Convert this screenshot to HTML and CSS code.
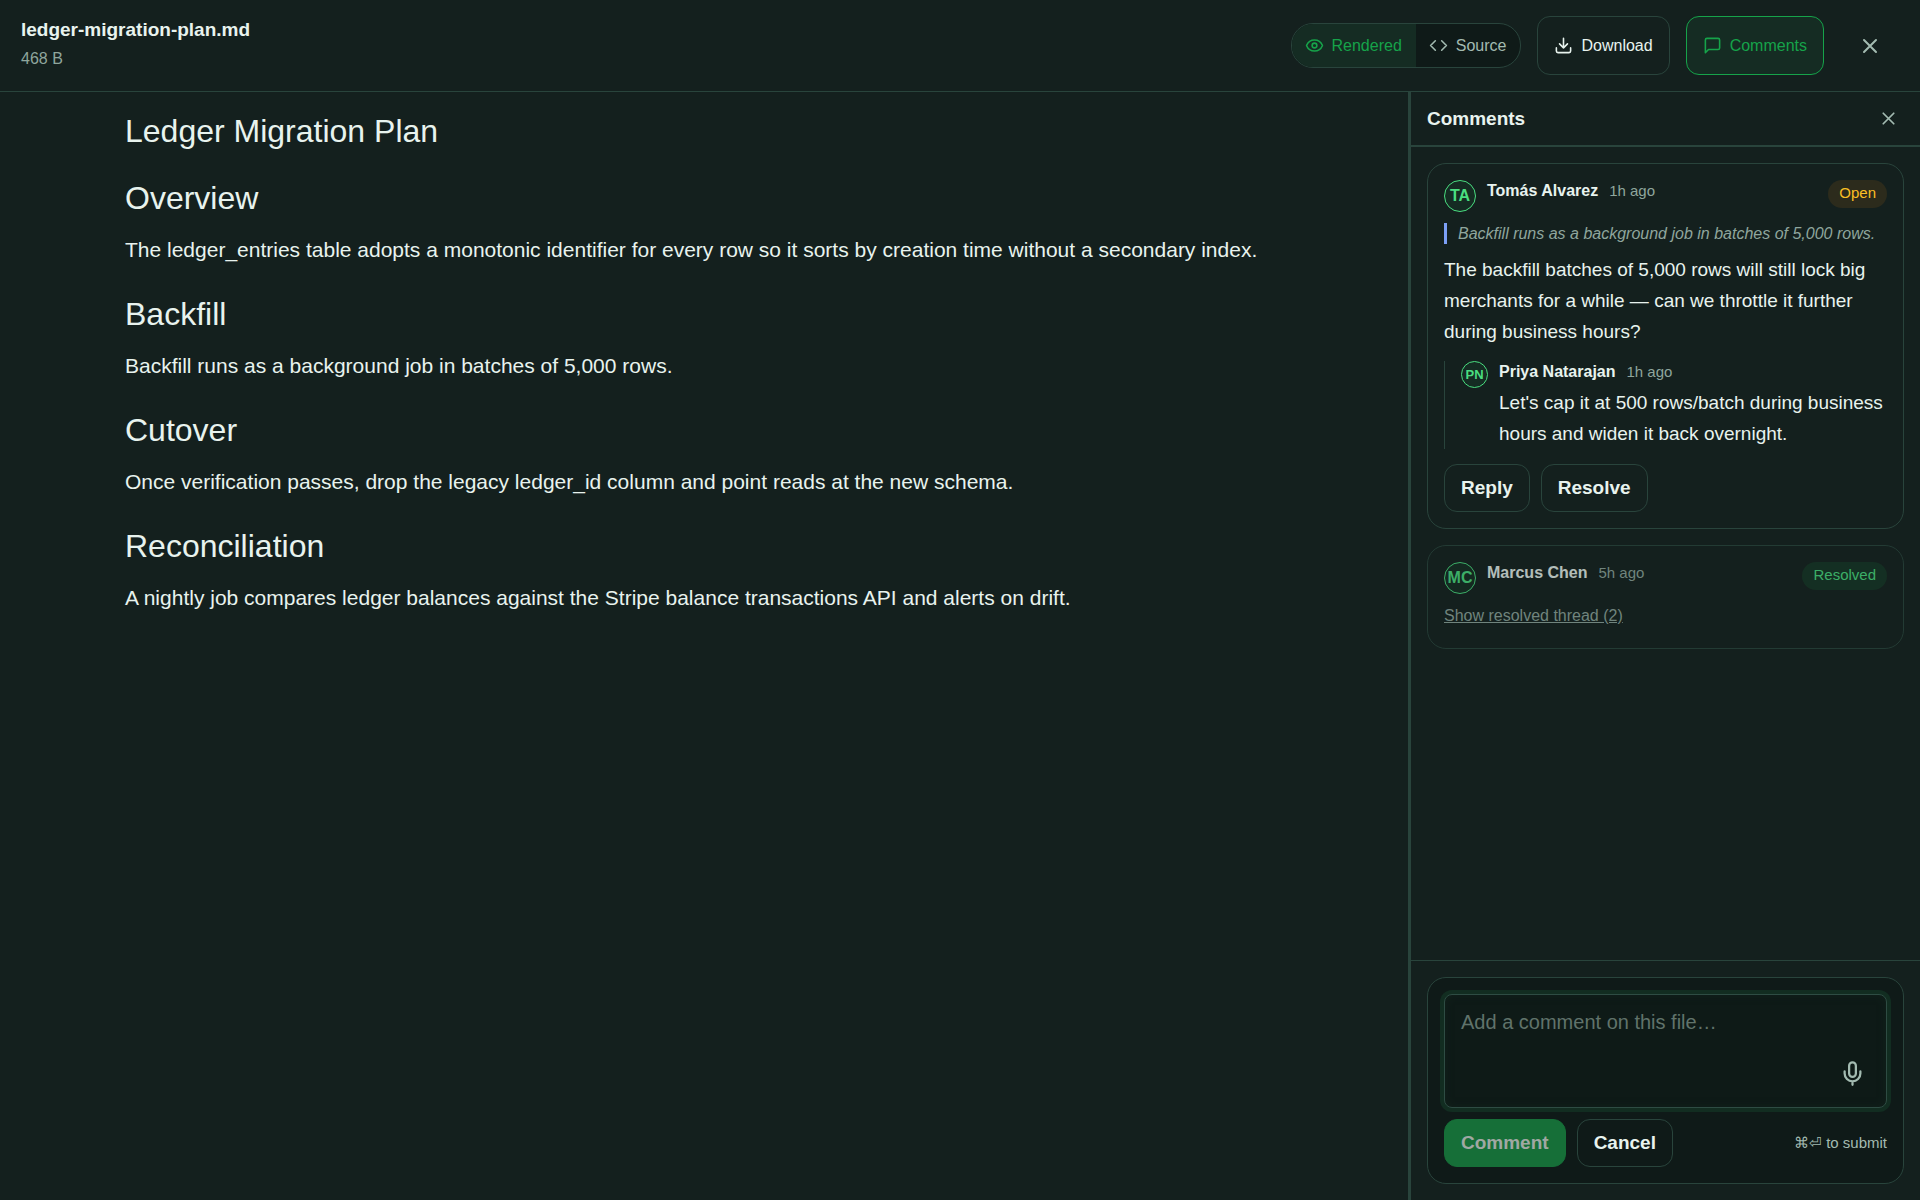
FILE: index.html
```
<!DOCTYPE html>
<html lang="en">

<head>
    <title>ledger-migration-plan.md</title>
    <meta charset="utf-8">
    <meta name="viewport" content="width=device-width, initial-scale=1.0">
    <link rel="stylesheet" href="styles.css">
</head>

<body>
    <header class="topbar">
        <div class="file">
            <div class="file-name">ledger-migration-plan.md</div>
            <div class="file-size">468 B</div>
        </div>
        <div class="actions">
            <div class="toggle" role="group" aria-label="View mode">
                <button type="button" class="toggle-btn active" aria-pressed="true">
                    <svg class="icon" viewBox="0 0 24 24"><path d="M2.06 12.35a1 1 0 0 1 0-.7 10.75 10.75 0 0 1 19.88 0 1 1 0 0 1 0 .7 10.75 10.75 0 0 1-19.88 0"/><circle cx="12" cy="12" r="3"/></svg>
                    Rendered
                </button>
                <button type="button" class="toggle-btn" aria-pressed="false">
                    <svg class="icon" viewBox="0 0 24 24"><path d="m16 18 6-6-6-6M8 6l-6 6 6 6"/></svg>
                    Source
                </button>
            </div>
            <button type="button" class="action-btn">
                <svg class="icon" viewBox="0 0 24 24"><path d="M12 15V3M21 15v4a2 2 0 0 1-2 2H5a2 2 0 0 1-2-2v-4M7 10l5 5 5-5"/></svg>
                Download
            </button>
            <button type="button" class="action-btn active" aria-pressed="true">
                <svg class="icon" viewBox="0 0 24 24"><path d="M21 15a2 2 0 0 1-2 2H7l-4 4V5a2 2 0 0 1 2-2h14a2 2 0 0 1 2 2z"/></svg>
                Comments
            </button>
            <button type="button" class="close-btn" aria-label="Close file">
                <svg class="icon-lg" viewBox="0 0 24 24"><path d="M18 6 6 18M6 6l12 12"/></svg>
            </button>
        </div>
    </header>

    <div class="main">
        <main class="viewer">
            <article class="doc">
                <h1>Ledger Migration Plan</h1>
                <h2>Overview</h2>
                <p>The ledger_entries table adopts a monotonic identifier for every row so it sorts by creation time without a secondary index.</p>
                <h2>Backfill</h2>
                <p>Backfill runs as a background job in batches of 5,000 rows.</p>
                <h2>Cutover</h2>
                <p>Once verification passes, drop the legacy ledger_id column and point reads at the new schema.</p>
                <h2>Reconciliation</h2>
                <p>A nightly job compares ledger balances against the Stripe balance transactions API and alerts on drift.</p>
            </article>
        </main>

        <aside class="sidebar">
            <div class="sidebar-header">
                <h2>Comments</h2>
                <button type="button" class="panel-close" aria-label="Close comments">
                    <svg class="icon-md" viewBox="0 0 24 24"><path d="M18 6 6 18M6 6l12 12"/></svg>
                </button>
            </div>

            <div class="threads">
                <section class="card">
                    <div class="comment-head">
                        <span class="avatar">TA</span>
                        <span class="author">Tomás Alvarez</span>
                        <span class="time">1h ago</span>
                        <span class="badge open">Open</span>
                    </div>
                    <blockquote class="quote">Backfill runs as a background job in batches of 5,000 rows.</blockquote>
                    <p class="comment-text">The backfill batches of 5,000 rows will still lock big merchants for a while — can we throttle it further during business hours?</p>
                    <div class="reply">
                        <span class="avatar small">PN</span>
                        <div class="reply-body">
                            <div class="reply-head">
                                <span class="author">Priya Natarajan</span>
                                <span class="time">1h ago</span>
                            </div>
                            <p class="comment-text">Let's cap it at 500 rows/batch during business hours and widen it back overnight.</p>
                        </div>
                    </div>
                    <div class="card-actions">
                        <button type="button" class="btn">Reply</button>
                        <button type="button" class="btn">Resolve</button>
                    </div>
                </section>

                <section class="card resolved">
                    <div class="comment-head">
                        <span class="avatar">MC</span>
                        <span class="author">Marcus Chen</span>
                        <span class="time">5h ago</span>
                        <span class="badge done">Resolved</span>
                    </div>
                    <button type="button" class="show-thread">Show resolved thread (2)</button>
                </section>
            </div>

            <div class="composer-wrap">
                <form class="composer">
                    <div class="field">
                        <textarea class="input" aria-label="Add a comment" placeholder="Add a comment on this file…"></textarea>
                        <button type="button" class="mic" aria-label="Dictate">
                            <svg class="icon-xl" viewBox="0 0 24 24"><path d="M12 19v3M19 10v2a7 7 0 0 1-14 0v-2"/><rect x="9" y="2" width="6" height="13" rx="3"/></svg>
                        </button>
                    </div>
                    <div class="composer-actions">
                        <button type="submit" class="btn primary" disabled>Comment</button>
                        <button type="button" class="btn">Cancel</button>
                        <span class="hint">⌘⏎ to submit</span>
                    </div>
                </form>
            </div>
        </aside>
    </div>
</body>

</html>
```
FILE: styles.css
```
:root {
    --bg: #14201e;
    --bg-deep: #0f1a18;
    --border: #29443c;
    --text: #e8f3ee;
    --muted: #8fa69d;
    --icon: #a3bbb1;
    --green: #16a34a;
    --green-light: #4ade80;
    --green-bg: #152c23;
}

* {
    box-sizing: border-box;
}

body {
    margin: 0;
    height: 100vh;
    display: flex;
    flex-direction: column;
    overflow: hidden;
    background: var(--bg);
    color: var(--text);
    font-family: "Liberation Sans", Arial, sans-serif;
    font-size: 16px;
}

h1, h2, p, blockquote {
    margin: 0;
}

button {
    font-family: inherit;
    color: inherit;
    background: none;
    border: 0;
    padding: 0;
    cursor: pointer;
}

svg {
    flex: none;
    fill: none;
    stroke: currentColor;
    stroke-width: 2;
    stroke-linecap: round;
    stroke-linejoin: round;
}

.icon { width: 19px; height: 19px; }
.icon-md { width: 21px; height: 21px; }
.icon-lg { width: 24px; height: 24px; }
.icon-xl { width: 27px; height: 27px; }

/* top bar */
.topbar {
    display: flex;
    justify-content: space-between;
    padding: 16px 21px;
    border-bottom: 1px solid var(--border);
}

.file-name {
    font-size: 19px;
    font-weight: bold;
    line-height: 28px;
}

.file-size {
    color: var(--muted);
    line-height: 30px;
}

.actions {
    display: flex;
    align-items: center;
    gap: 16px;
}

.toggle {
    display: flex;
    height: 45px;
    border: 1px solid var(--border);
    border-radius: 22px;
    background: var(--bg-deep);
    overflow: hidden;
}

.toggle-btn {
    display: flex;
    align-items: center;
    gap: 8px;
    padding: 0 14px 0 13px;
    font-size: 16px;
    color: var(--icon);
}

.toggle-btn.active {
    color: var(--green);
    background: var(--green-bg);
}

.action-btn {
    display: flex;
    align-items: center;
    gap: 8px;
    height: 59px;
    padding: 0 16px;
    border: 1px solid var(--border);
    border-radius: 13px;
    font-size: 16px;
}

.action-btn.active {
    color: var(--green);
    border-color: var(--green);
    background: var(--green-bg);
}

.close-btn {
    display: flex;
    align-items: center;
    justify-content: center;
    width: 59px;
    height: 59px;
    color: var(--icon);
}

/* document */
.main {
    flex: 1;
    display: flex;
    min-height: 0;
}

.viewer {
    flex: 1;
    overflow-y: auto;
}

.doc {
    max-width: 1200px;
    margin: 0 auto;
    padding: 19px 21px;
}

.doc h1,
.doc h2 {
    font-size: 32px;
    font-weight: normal;
    line-height: 40px;
    margin-bottom: 27px;
}

.doc h2 {
    margin-bottom: 15px;
}

.doc p {
    font-size: 21px;
    line-height: 34px;
    margin-bottom: 27px;
}

/* comments panel */
.sidebar {
    display: flex;
    flex-direction: column;
    width: 512px;
    border-left: 3px solid var(--border);
}

.sidebar-header {
    display: flex;
    align-items: center;
    justify-content: space-between;
    height: 55px;
    padding: 0 21px 0 16px;
    border-bottom: 2px solid var(--border);
}

.sidebar-header h2 {
    font-size: 19px;
}

.panel-close {
    display: flex;
    color: var(--icon);
}

.threads {
    flex: 1;
    display: flex;
    flex-direction: column;
    gap: 16px;
    padding: 16px;
    overflow-y: auto;
}

.card {
    padding: 16px;
    border: 1px solid var(--border);
    border-radius: 19px;
}

.card.resolved {
    opacity: 0.75;
}

.comment-head {
    display: flex;
    align-items: flex-start;
    gap: 11px;
}

.avatar {
    display: flex;
    flex: none;
    align-items: center;
    justify-content: center;
    width: 32px;
    height: 32px;
    border: 1px solid var(--green-light);
    border-radius: 50%;
    background: var(--green-bg);
    color: var(--green-light);
    font-weight: bold;
}

.avatar.small {
    width: 27px;
    height: 27px;
    font-size: 13px;
}

.author {
    font-weight: bold;
    line-height: 22px;
}

.time {
    color: var(--muted);
    font-size: 15px;
    line-height: 22px;
}

.badge {
    margin-left: auto;
    height: 28px;
    padding: 0 11px;
    border-radius: 14px;
    font-size: 15px;
    line-height: 25px;
}

.badge.open {
    color: #fbbf24;
    background: #2c2b1c;
}

.badge.done {
    color: var(--green-light);
    background: #153525;
}

.quote {
    margin-top: 11px;
    padding-left: 11px;
    border-left: 3px solid #7c9ff5;
    color: var(--muted);
    font-style: italic;
    line-height: 21px;
}

.comment-text {
    font-size: 19px;
    line-height: 31px;
}

.quote + .comment-text {
    margin-top: 10px;
}

.reply {
    display: flex;
    gap: 11px;
    margin-top: 14px;
    padding-left: 16px;
    border-left: 1px solid var(--border);
}

.reply-head {
    display: flex;
    gap: 11px;
    margin-bottom: 4px;
}

.card-actions {
    display: flex;
    gap: 11px;
    margin-top: 15px;
}

.btn {
    height: 48px;
    padding: 0 16px;
    border: 1px solid var(--border);
    border-radius: 13px;
    font-size: 19px;
    font-weight: bold;
}

.btn.primary {
    border-color: #166f38;
    background: #166f38;
    color: #a0a8a3;
}

.show-thread {
    display: block;
    margin-top: 6px;
    color: var(--muted);
    font-size: 16px;
    line-height: 32px;
    text-decoration: underline;
}

.composer-wrap {
    padding: 16px;
    border-top: 1px solid var(--border);
}

.composer {
    padding: 16px;
    border: 1px solid var(--border);
    border-radius: 19px;
    background: var(--bg-deep);
}

.field {
    position: relative;
}

.input {
    display: block;
    width: 100%;
    height: 114px;
    padding: 16px;
    border: 1px solid #2e4c43;
    border-radius: 8px;
    outline: none;
    resize: none;
    background: #0e1a17;
    box-shadow: 0 0 0 4px #122d21, inset 0 0 8px rgba(22, 44, 34, 0.4);
    color: var(--text);
    font-family: inherit;
    font-size: 20px;
}

.input::placeholder {
    color: #60736b;
}

/* sits over the bottom right corner of the text box */
.mic {
    position: absolute;
    right: 21px;
    bottom: 21px;
    display: flex;
    color: var(--icon);
}

.composer-actions {
    display: flex;
    align-items: center;
    gap: 11px;
    margin-top: 11px;
}

.hint {
    margin-left: auto;
    color: var(--icon);
    font-size: 15px;
}
```
